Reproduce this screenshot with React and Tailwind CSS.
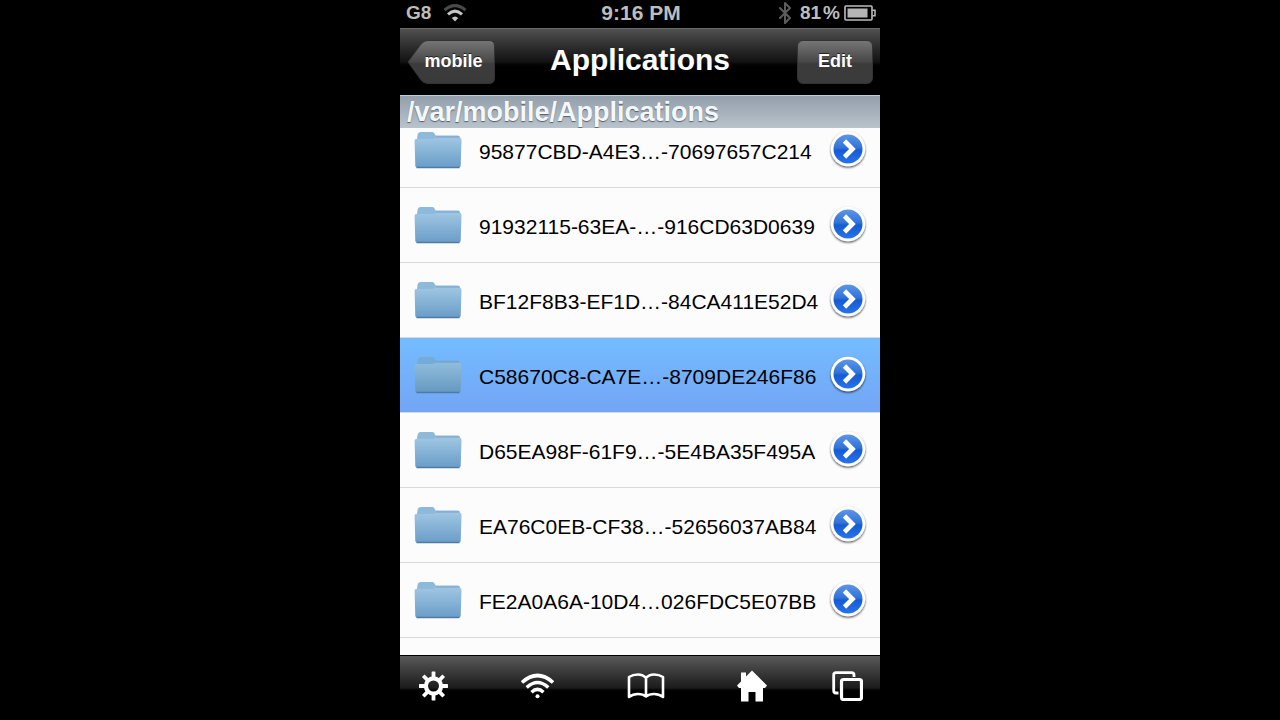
import React, { useState } from "react";
import { Bluetooth } from "lucide-react";

const FOLDERS = [
  "95877CBD-A4E3…-70697657C214",
  "91932115-63EA-…-916CD63D0639",
  "BF12F8B3-EF1D…-84CA411E52D4",
  "C58670C8-CA7E…-8709DE246F86",
  "D65EA98F-61F9…-5E4BA35F495A",
  "EA76C0EB-CF38…-52656037AB84",
  "FE2A0A6A-10D4…026FDC5E07BB",
];

const FolderIcon = ({ selected }) => (
  <svg width="48" height="38" viewBox="0 0 48 38" className="shrink-0" aria-hidden="true">
    <defs>
      <linearGradient id="folder" x1="0" y1="0" x2="0" y2="1">
        <stop offset="0" stopColor="#a0c6e2" />
        <stop offset="1" stopColor="#6a9dc8" />
      </linearGradient>
      <linearGradient id="folderSelected" x1="0" y1="0" x2="0" y2="1">
        <stop offset="0" stopColor="#8fbddc" />
        <stop offset="1" stopColor="#6699c0" />
      </linearGradient>
    </defs>
    <path
      d="M3.500 4Q4 1 7 1H18.500Q20.500 1 21 3.500L21.500 4.500H43.500Q46 4.500 46 7V12H2.500Z"
      fill={selected ? "#74acd8" : "#8db9da"}
    />
    <path
      d="M2 8Q.5 8 .6 10L1.300 35Q1.500 36.500 3.500 36.500H44.500Q46.500 36.500 46.700 35L47.500 9Q47.500 6.500 45.500 6.500H22Q20 8 17 8Z"
      fill={selected ? "url(#folderSelected)" : "url(#folder)"}
    />
    <path d="M22 6H45.500" fill="none" stroke="#6f9dc2" strokeOpacity=".6" />
    <path d="M2.500 36.500H45.500" stroke="#4d7ba3" strokeWidth="1.500" />
  </svg>
);

const DisclosureIcon = () => (
  <svg width="40" height="42" viewBox="0 0 40 42" aria-hidden="true">
    <defs>
      <linearGradient id="disclosure" x1="0" y1="0" x2="0" y2="1">
        <stop offset="0" stopColor="#5d96e6" />
        <stop offset=".46" stopColor="#3173da" />
        <stop offset=".54" stopColor="#165bd2" />
        <stop offset="1" stopColor="#2874ec" />
      </linearGradient>
      <filter id="disclosureShadow" x="-20%" y="-20%" width="140%" height="150%">
        <feDropShadow dx="0" dy="1.200" stdDeviation="1.300" floodColor="#000" floodOpacity=".75" />
      </filter>
    </defs>
    <circle cx="20" cy="20" r="17.200" fill="#fff" filter="url(#disclosureShadow)" />
    <circle cx="20" cy="20" r="14.500" fill="url(#disclosure)" />
    <path d="M16.500 12L24.500 20L16.500 28" fill="none" stroke="#fff" strokeWidth="4.600" />
  </svg>
);

const StatusWifiIcon = () => (
  <svg width="24" height="18" viewBox="0 0 24 18" fill="none" aria-hidden="true">
    <path d="M1.500 6.200Q12 -3 22.500 6.200" stroke="#4a4a4a" strokeWidth="3" />
    <path d="M5 10.300Q12 4 19 10.300" stroke="#c4c4c4" strokeWidth="3" />
    <path d="M12 17.500L8.800 14Q12 10.800 15.200 14Z" fill="#c4c4c4" />
  </svg>
);

const BatteryIcon = () => (
  <svg width="32" height="16" viewBox="0 0 32 16" aria-hidden="true">
    <rect x="1" y="1" width="27" height="14" rx="1" fill="none" stroke="#bdbdbd" strokeWidth="1.600" />
    <rect x="3.500" y="3.500" width="20" height="9" fill="#b5b5b5" />
    <path d="M28.500 5.200H31V10.800H28.500" fill="none" stroke="#bdbdbd" strokeWidth="1.500" />
  </svg>
);

const GearIcon = () => (
  <svg width="29" height="30" viewBox="-14.500 -15 29 30" aria-hidden="true">
    <circle r="7.600" fill="none" stroke="#fff" strokeWidth="4.200" />
    {[0, 45, 90, 135, 180, 225, 270, 315].map((angle) => (
      <rect
        key={angle}
        x="-1.900"
        y="-14.500"
        width="3.800"
        height="6.500"
        rx=".4"
        fill="#fff"
        transform={`rotate(${angle})`}
      />
    ))}
  </svg>
);

const WifiIcon = () => (
  <svg width="33" height="26" viewBox="0 0 33 26" fill="none" stroke="#fff" aria-hidden="true">
    <path d="M1 9.500Q16.500 -4.500 32 9.500" strokeWidth="3.600" />
    <path d="M5.700 14.500Q16.500 4.500 27.300 14.500" strokeWidth="3.400" />
    <path d="M10.500 19.300Q16.500 13.500 22.500 19.300" strokeWidth="3.400" />
    <circle cx="16.500" cy="23.300" r="2" fill="#fff" stroke="none" />
  </svg>
);

const BookIcon = () => (
  <svg width="38" height="26" viewBox="0 0 38 26" fill="none" aria-hidden="true">
    <path
      d="M19 5Q16 1.500 11 1.500Q6 1.500 2 4V24Q6 21 11 21Q16 21 19 23.500Q22 21 27 21Q32 21 36 24V4Q32 1.500 27 1.500Q22 1.500 19 5ZM19 5V23"
      stroke="#fff"
      strokeWidth="2.600"
      strokeLinejoin="round"
    />
  </svg>
);

const HomeIcon = () => (
  <svg width="30" height="32" viewBox="0 0 30 32" fill="#fff" aria-hidden="true">
    <path d="M15 .5L30 15.500L28 18H26V31.500H18.500V22H11.500V31.500H4V18H2L0 15.500L4 11.500V2.500H9V6.500Z" />
  </svg>
);

const WindowsIcon = () => (
  <svg width="31" height="30" viewBox="0 0 31 30" fill="none" stroke="#fff" aria-hidden="true">
    <path d="M6.500 22H4Q1.700 22 1.700 19.500V4Q1.700 1.700 4 1.700H19.500Q22 1.700 22 4V6" strokeWidth="2.800" />
    <rect x="9.500" y="8.500" width="20" height="20" rx="2" strokeWidth="3.200" />
  </svg>
);

const TOOLS = [
  { label: "Settings", Icon: GearIcon, className: "" },
  { label: "Wi-Fi", Icon: WifiIcon, className: "" },
  { label: "Bookmarks", Icon: BookIcon, className: "" },
  { label: "Home", Icon: HomeIcon, className: "" },
  { label: "Windows", Icon: WindowsIcon, className: "-ml-2" },
];

const StatusBar = () => (
  <div className="grid h-7 shrink-0 grid-cols-[1fr_auto_1fr] items-center bg-black pr-1 pb-[2px] pl-[6px] text-[21px] leading-[26px] font-bold text-[#bdbdbd]">
    <div className="flex items-center gap-3">
      <span className="text-[19px]">G8</span>
      <StatusWifiIcon />
    </div>
    <span>9:16 PM</span>
    <div className="flex items-center justify-end gap-1">
      <Bluetooth size={24} strokeWidth={2} className="-mr-px text-[#5c5c5c]" />
      <span className="flex gap-[2px] text-[19px]">
        <span>81</span>
        <span>%</span>
      </span>
      <BatteryIcon />
    </div>
  </div>
);

const NavBar = () => (
  <header className="grid h-[67px] shrink-0 grid-cols-[1fr_auto_1fr] items-center border-t border-[#6a6a6a] bg-linear-to-b from-[#505050] via-[#121212] via-50% to-black to-60% px-[7px] font-bold text-white">
    <button className="relative h-11 w-[88px] pb-[2px] pl-[5px] text-lg [text-shadow:0_-1px_0_#222]">
      <svg className="absolute inset-0" width="88" height="44" viewBox="0 0 88 44" aria-hidden="true">
        <defs>
          <linearGradient id="back" x1="0" y1="0" x2="0" y2="1">
            <stop offset="0" stopColor="#767676" />
            <stop offset=".5" stopColor="#474747" />
            <stop offset=".54" stopColor="#3c3c3c" />
            <stop offset="1" stopColor="#3a3a3a" />
          </linearGradient>
        </defs>
        <path
          d="M1 22L14 4Q17 .5 21 .5H82Q87.500 .5 87.500 6V38Q87.500 43.500 82 43.500H21Q17 43.500 14 40Z"
          fill="url(#back)"
          stroke="#333"
        />
      </svg>
      <span className="relative">mobile</span>
    </button>
    <h1 className="pb-1 text-[30px] leading-9">Applications</h1>
    <button className="h-11 w-19 justify-self-end rounded-md border border-[#333] bg-linear-to-b from-[#767676] via-[#474747] via-50% to-[#3b3b3b] to-54% pb-[2px] text-lg [text-shadow:0_-1px_0_#222]">
      Edit
    </button>
  </header>
);

export default function App() {
  const [selected, setSelected] = useState(3);

  return (
    <div className="h-screen bg-black font-['Liberation_Sans',Arial,sans-serif]">
      <div className="mx-auto flex h-full w-full max-w-[480px] flex-col">
        <StatusBar />
        <NavBar />

        <div className="h-[33px] shrink-0 border-t border-[#c3ccd4] bg-linear-to-b from-[#939fac] to-[#b9c3cc] px-[7px] text-[27px] leading-8 font-bold text-[#f4f8fc] [text-shadow:0_1px_1px_#555d66]">
          /var/mobile/Applications
        </div>

        <main className="min-h-0 flex-1 overflow-hidden bg-[#fdfcfd]">
          <ul className="-mt-[15px]">
            {FOLDERS.map((name, i) => (
              <li
                key={name}
                className={`flex h-[75px] items-center border-b border-[#d9d9d9] pr-3 pl-[14px] ${
                  i === selected ? "bg-linear-to-b from-[#74bcff] to-[#73a5f5]" : ""
                }`}
              >
                <button
                  onClick={() => setSelected(i)}
                  className="flex min-w-0 flex-1 items-center gap-[17px] text-left text-[21px] whitespace-nowrap text-black"
                >
                  <FolderIcon selected={i === selected} />
                  <span className="pt-1">{name}</span>
                </button>
                <button aria-label={`Details for ${name}`} className="shrink-0">
                  <DisclosureIcon />
                </button>
              </li>
            ))}
          </ul>
        </main>

        <nav className="flex h-[65px] shrink-0 items-center justify-between border-t border-black bg-linear-to-b from-[#5a5a5a] via-[#1c1c1c] via-50% to-black to-56% pr-[17px] pb-1 pl-[19px]">
          {TOOLS.map(({ label, Icon, className }) => (
            <button key={label} aria-label={label} className={className}>
              <Icon />
            </button>
          ))}
        </nav>
      </div>
    </div>
  );
}
